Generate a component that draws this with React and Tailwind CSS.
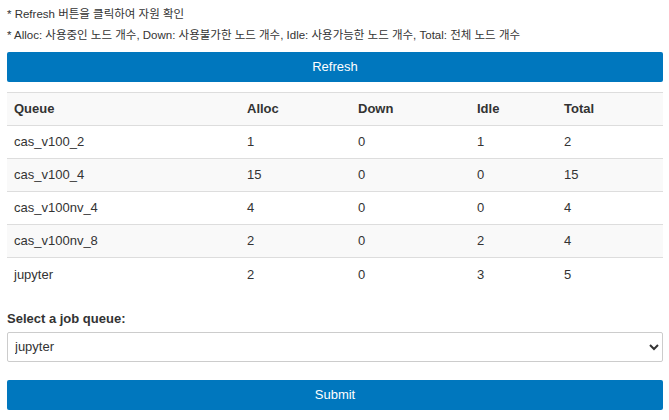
import { useState } from 'react';

const rows = [
  { queue: 'cas_v100_2', alloc: 1, down: 0, idle: 1, total: 2 },
  { queue: 'cas_v100_4', alloc: 15, down: 0, idle: 0, total: 15 },
  { queue: 'cas_v100nv_4', alloc: 4, down: 0, idle: 0, total: 4 },
  { queue: 'cas_v100nv_8', alloc: 2, down: 0, idle: 2, total: 4 },
  { queue: 'jupyter', alloc: 2, down: 0, idle: 3, total: 5 },
];

export default function App() {
  const [queue, setQueue] = useState('jupyter');

  return (
    <div
      className="min-h-screen bg-white px-[7px] pt-[6px] text-[#333]"
      style={{ fontFamily: '"Liberation Sans", Arial, "Noto Sans CJK KR", sans-serif' }}
    >
      <p className="text-[11.5px] leading-[16px]">* Refresh 버튼을 클릭하여 자원 확인</p>
      <p className="mt-[5px] text-[11.5px] leading-[16px]">
        * Alloc: 사용중인 노드 개수, Down: 사용불가한 노드 개수, Idle: 사용가능한 노드 개수, Total: 전체 노드 개수
      </p>

      <button className="mt-[9px] h-[30px] w-[656px] rounded-[2px] bg-[#0077be] text-[13px] text-white">
        Refresh
      </button>

      <table className="mt-[10px] w-[656px] border-collapse text-[13px]">
        <thead>
          <tr className="h-[33px] border-t border-[#ddd] bg-[#f9f9f9]">
            <th className="w-[233px] px-[7px] text-left font-bold">Queue</th>
            <th className="w-[111px] px-[7px] text-left font-bold">Alloc</th>
            <th className="w-[119px] px-[7px] text-left font-bold">Down</th>
            <th className="w-[87px] px-[7px] text-left font-bold">Idle</th>
            <th className="px-[7px] text-left font-bold">Total</th>
          </tr>
        </thead>
        <tbody>
          {rows.map((r, i) => (
            <tr
              key={r.queue}
              className={`h-[33px] border-t border-[#ddd] ${i % 2 === 1 ? 'bg-[#f9f9f9]' : 'bg-white'}`}
            >
              <td className="px-[7px]">{r.queue}</td>
              <td className="px-[7px]">{r.alloc}</td>
              <td className="px-[7px]">{r.down}</td>
              <td className="px-[7px]">{r.idle}</td>
              <td className="px-[7px]">{r.total}</td>
            </tr>
          ))}
        </tbody>
      </table>

      <label className="mt-[19px] block text-[13px] font-bold leading-[18px]">Select a job queue:</label>
      <div className="relative mt-[4px] w-[656px]">
        <select
          value={queue}
          onChange={(e) => setQueue(e.target.value)}
          className="h-[30px] w-full appearance-none rounded-[2px] border border-[#ccc] bg-white px-[7px] text-[13px] text-[#333] outline-none"
        >
          {rows.map((r) => (
            <option key={r.queue} value={r.queue}>
              {r.queue}
            </option>
          ))}
        </select>
        <svg
          className="pointer-events-none absolute right-[4px] top-[11px]"
          width="10"
          height="8"
          viewBox="0 0 10 8"
        >
          <path d="M1 2l4 4 4-4" fill="none" stroke="#333" strokeWidth="2" />
        </svg>
      </div>

      <button className="mt-[18px] h-[30px] w-[656px] rounded-[2px] bg-[#0077be] text-[13px] text-white">
        Submit
      </button>
    </div>
  );
}
